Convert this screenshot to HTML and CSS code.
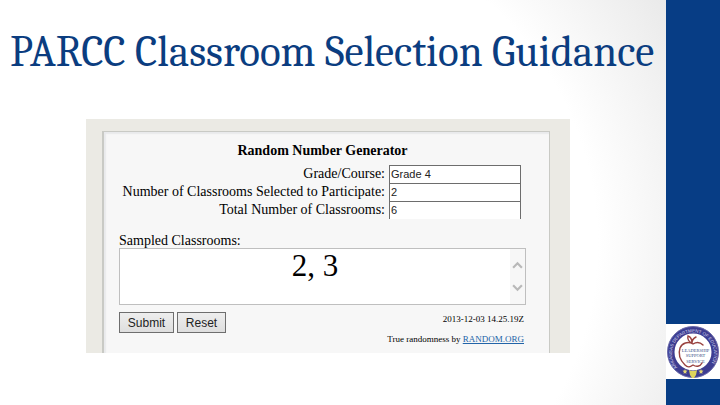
FILE: index.html
```html
<!DOCTYPE html>
<html lang="en">
<head>
<meta charset="utf-8">
<title>PARCC Classroom Selection Guidance</title>
<link rel="stylesheet" href="styles.css">
</head>
<body>
<main class="slide">
  <h1 class="title">PARCC Classroom Selection Guidance</h1>
  <section class="frame">
    <form class="generator">
      <h2 class="heading">Random Number Generator</h2>
      <div class="fields">
        <label for="grade">Grade/Course:</label>
        <input id="grade" type="text" value="Grade 4">
        <label for="selected">Number of Classrooms Selected to Participate:</label>
        <input id="selected" type="text" value="2">
        <label for="total">Total Number of Classrooms:</label>
        <input id="total" type="text" value="6">
      </div>
      <label class="result-label" for="result">Sampled Classrooms:</label>
      <div class="result">
        <textarea id="result">2, 3</textarea>
        <div class="scroller">
          <svg viewBox="0 0 10 8"><path d="M1 6 5 2 9 6"/></svg>
          <svg viewBox="0 0 10 8"><path d="M1 2 5 6 9 2"/></svg>
        </div>
      </div>
      <div class="bottom">
        <div class="buttons">
          <button class="submit" type="submit">Submit</button>
          <button class="reset" type="reset">Reset</button>
        </div>
        <div class="credits">
          <p>2013-12-03 14.25.19Z</p>
          <p>True randomness by <a href="#">RANDOM.ORG</a></p>
        </div>
      </div>
    </form>
  </section>
</main>
<aside class="band">
  <svg class="seal" viewBox="0 0 108 110" role="img" aria-label="Leadership Support Service">
    <defs><path id="ring" d="M23 87A42 42 0 1 1 85 87"/></defs>
    <g transform="scale(2)">
      <circle cx="27" cy="28" r="22" fill="#fff" stroke="#3d3d91" stroke-width="7"/>
      <circle cx="27" cy="28" r="25.5" fill="none" stroke="#6b6ba9" stroke-width="1"/>
      <path d="M23 46q4 2 8 0l-1 5-2 3h-2l-2-3z" fill="#ddd45c"/>
      <path d="m19 45 .7 1.6 1.8.2-1.4 1.2.4 1.8-1.5-.9-1.5.9.4-1.8-1.4-1.2 1.8-.2zM35 45l.7 1.6 1.8.2-1.4 1.2.4 1.8-1.5-.9-1.5.9.4-1.8-1.4-1.2 1.8-.2z" fill="#e4d875"/>
      <path d="M37 21c-3-3-7-3-10-1-5-3-11-1-13 4-2 6 0 12 5 17 3 3 5 2 8 0 3 2 7 2 9-2M26 19c-3-1-5-4-4-7 3 1 4 4 4 7 0-3 2-5 4-6" fill="none" stroke="#99413e" stroke-width="1.4" stroke-linecap="round"/>
    </g>
    <text class="ring-text"><textPath href="#ring">ARKANSAS DEPARTMENT OF EDUCATION</textPath></text>
    <text class="seal-text" x="59" y="55">LEADERSHIP</text>
    <text class="seal-text" x="59" y="66">SUPPORT</text>
    <text class="seal-text" x="59" y="77">SERVICE</text>
  </svg>
</aside>
</body>
</html>
```

FILE: styles.css
```css
* { box-sizing: border-box; }
body {
  margin: 0;
  min-height: 100vh;
  display: grid;
  grid-template-columns: minmax(0, 1fr) 54px;
  font-family: "Liberation Serif", serif;
  color: #000;
}
.slide {
  padding: 24px 0 0 10px;
  background: radial-gradient(ellipse 78% 115% at 32% 60%, #fff 74%, #e6e6e6 106%);
}
.title {
  margin: 0;
  color: #0b3d80;
  font-family: Cambria, Caladea, "Liberation Serif", serif;
  font-size: 43px;
  font-weight: 400;
  line-height: 56px;
  white-space: nowrap;
}
.frame {
  width: 484px;
  margin: 39px 0 0 76px;
  padding: 12px 20px 0 16px;
  background: #ebeae4;
}
.generator {
  padding: 10px 23px 7px 15px;
  background: #f7f7f7;
  border: solid #c9cac5;
  border-width: 1px 1px 0 2px;
  box-shadow: inset 2px 2px 1px #e9eaec;
}
.heading {
  margin: 0 0 5px;
  font-size: 14px;
  line-height: 18px;
  text-align: center;
}
.fields {
  display: grid;
  grid-template-columns: 1fr 132px;
  column-gap: 4px;
  padding-right: 5px;
  font-size: 14px;
  line-height: 18px;
  text-align: right;
}
.fields input {
  width: 100%;
  height: 18px;
  padding: 0 1px 1px;
  border: solid #6d6d6d;
  border-width: 1px 1px 0;
  border-radius: 0;
  background: #fff;
  font: 11px "Liberation Sans", sans-serif;
  color: #222;
}
.result-label {
  display: block;
  margin-top: 14px;
  font-size: 14px;
  line-height: 15px;
}
.result {
  display: flex;
  height: 57px;
  background: #fff;
  border: 1px solid #bfbfbf;
}
.result textarea {
  flex: 1;
  min-width: 0;
  padding: 0;
  border: 0;
  resize: none;
  overflow: hidden;
  background: #fff;
  font: 31px/34px "Liberation Serif", serif;
  text-align: center;
  color: #000;
}
.scroller {
  width: 15px;
  padding: 12px 2px;
  display: flex;
  flex-direction: column;
  justify-content: space-between;
  background: #f7f7f7;
}
.scroller svg {
  width: 11px;
  height: 9px;
  fill: none;
  stroke: #b9b9b9;
  stroke-width: 2;
}
.bottom {
  display: flex;
  justify-content: space-between;
  padding: 7px 2px 0 0;
}
.buttons {
  display: flex;
  align-items: flex-start;
  gap: 3px;
}
.buttons button {
  height: 21px;
  padding: 0;
  border: 1px solid #6e6e6e;
  border-radius: 0;
  background: linear-gradient(#eee, #dedede);
  font: 12px "Liberation Sans", sans-serif;
  color: #222;
}
.submit { width: 55px; }
.reset { width: 49px; }
.credits {
  font-size: 9px;
  line-height: 14px;
  text-align: right;
}
.credits p { margin: 0 0 6px; }
.credits p:last-child { margin: 0; }
.credits a { color: #2264a8; }
.band {
  display: flex;
  flex-direction: column;
  justify-content: flex-end;
  padding-bottom: 26px;
  background: #073d85;
}
.seal {
  display: block;
  width: 100%;
  background: #fff;
}
.ring-text {
  font: 9px "Liberation Sans", sans-serif;
  fill: #d5d5ed;
}
.seal-text {
  font: 9px "Liberation Serif", serif;
  fill: #354d84;
  text-anchor: middle;
}
```
